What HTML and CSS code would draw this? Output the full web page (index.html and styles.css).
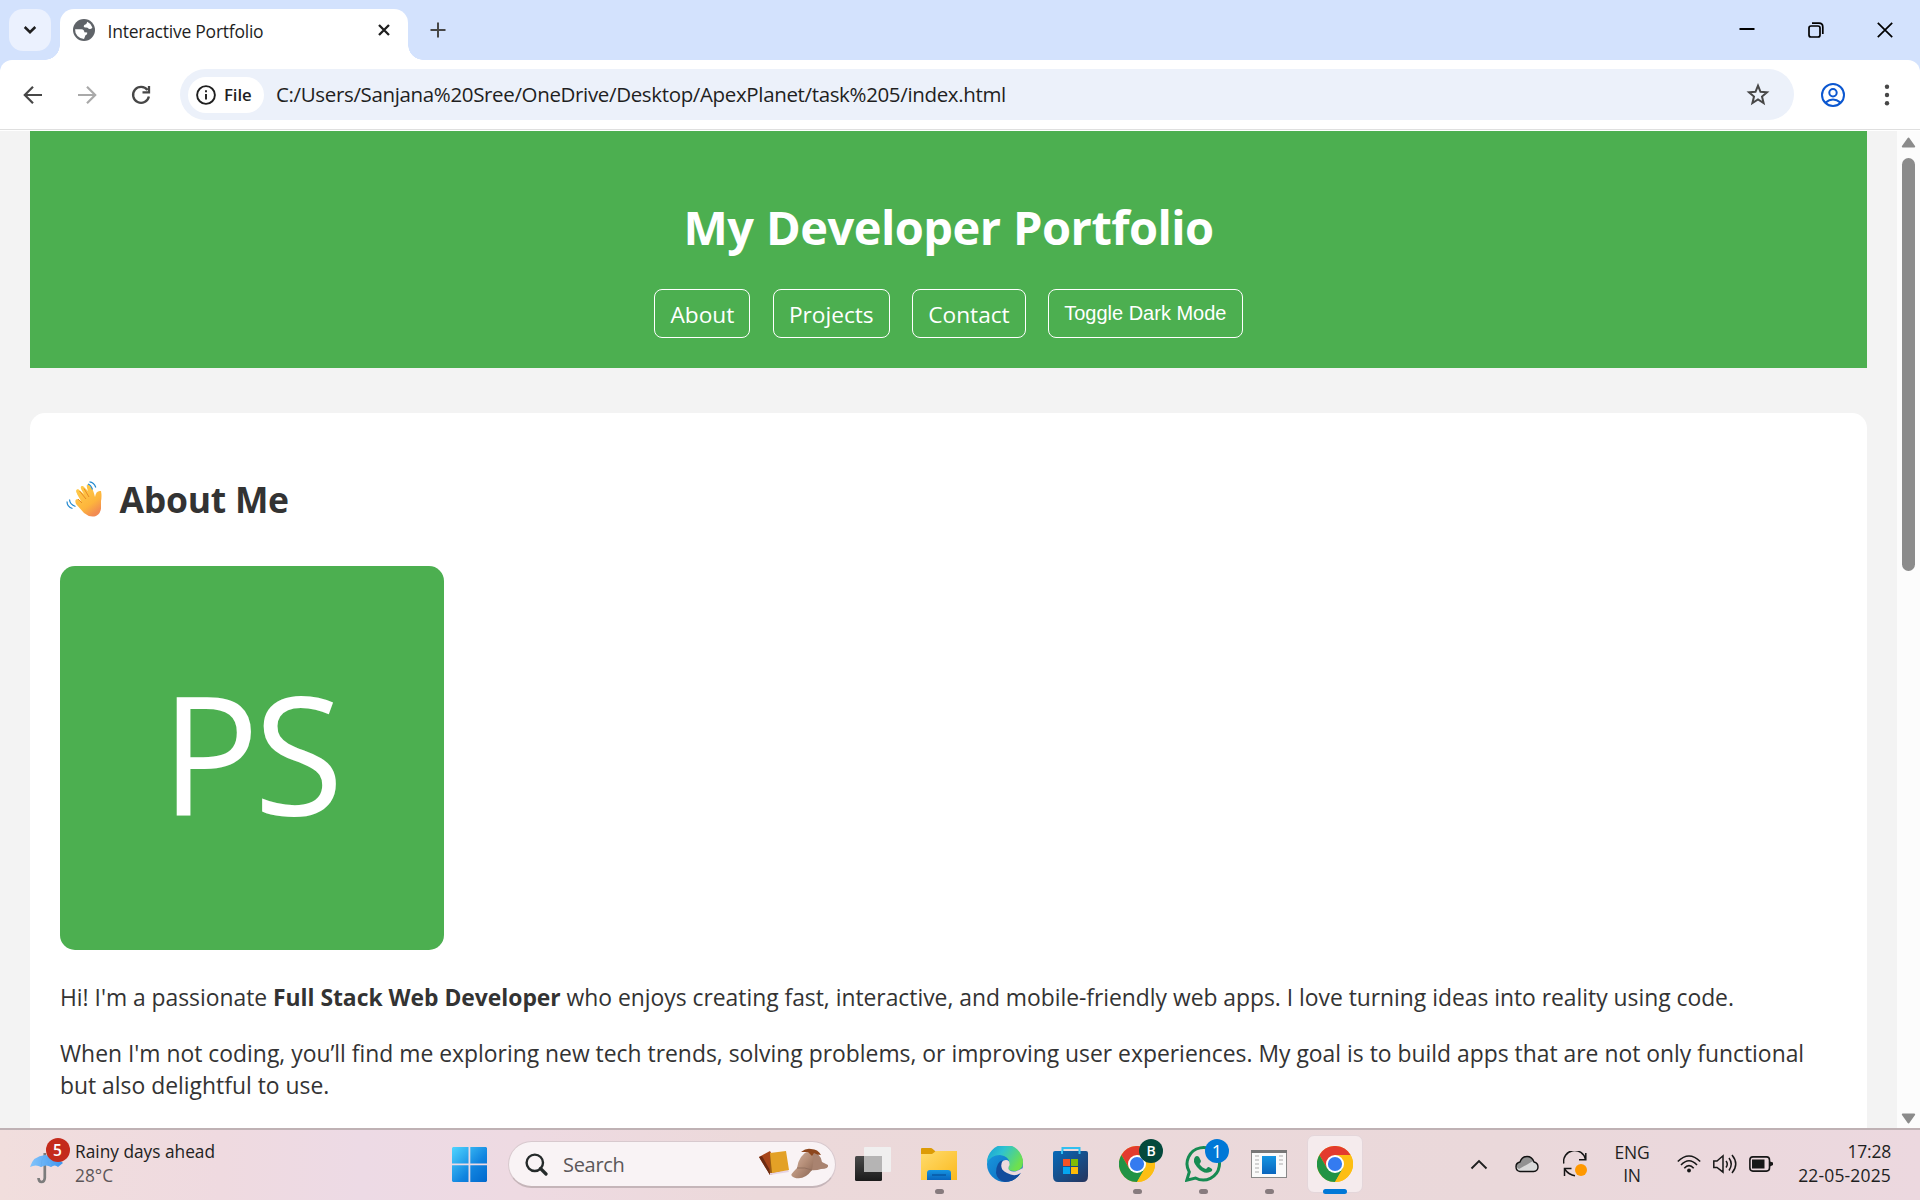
FILE: index.html
```html
<!DOCTYPE html>
<html lang="en">
<head>
<meta charset="utf-8">
<title>Interactive Portfolio</title>
<link rel="stylesheet" href="styles.css">
</head>
<body>
<svg width="0" height="0" class="defs" aria-hidden="true">
  <defs>
    <linearGradient id="win" x1="0" y1="0" x2="1" y2="1"><stop offset="0" stop-color="#4fd5ff"/><stop offset=".6" stop-color="#1184df"/><stop offset="1" stop-color="#0068cd"/></linearGradient>
    <linearGradient id="fold" x1="0" y1="0" x2="1" y2="1"><stop offset="0" stop-color="#ffdc6e"/><stop offset="1" stop-color="#fbb91d"/></linearGradient>
    <linearGradient id="blue" x1="0" y1="0" x2="0" y2="1"><stop offset="0" stop-color="#1595e2"/><stop offset="1" stop-color="#0965be"/></linearGradient>
    <linearGradient id="edgeTop" x1="0" y1="0" x2="1" y2=".5"><stop offset="0" stop-color="#159bd8"/><stop offset=".45" stop-color="#2fc3cf"/><stop offset="1" stop-color="#6ee04e"/></linearGradient>
    <linearGradient id="edgeLow" x1="0" y1="0" x2="1" y2="1"><stop offset="0" stop-color="#1b9de2"/><stop offset="1" stop-color="#0a63b8"/></linearGradient>
    <linearGradient id="store" x1="0" y1="0" x2="1" y2="1"><stop offset="0" stop-color="#0669b9"/><stop offset="1" stop-color="#27345c"/></linearGradient>
    <linearGradient id="dark" x1="0" y1="0" x2="0" y2="1"><stop offset="0" stop-color="#4a4a4a"/><stop offset="1" stop-color="#1b1b1b"/></linearGradient>
    <linearGradient id="hand" x1="0" y1="0" x2=".6" y2="1"><stop offset="0" stop-color="#ffcf4d"/><stop offset=".7" stop-color="#fdb53c"/><stop offset="1" stop-color="#f28b52"/></linearGradient>
    <linearGradient id="umb" x1="0" y1="0" x2="1" y2="0"><stop offset="0" stop-color="#83c4fb"/><stop offset="1" stop-color="#3d95ee"/></linearGradient>
    <linearGradient id="cap" x1="0" y1="0" x2="1" y2="1"><stop offset="0" stop-color="#d5b9a7"/><stop offset=".5" stop-color="#b8917b"/><stop offset="1" stop-color="#8a6553"/></linearGradient>
    <symbol id="chrome" viewBox="0 0 36 36">
      <circle cx="18" cy="18" r="18" fill="#fdbe13"/>
      <path d="M18 9H33.6A18 18 0 0 0 2.4 9L10.2 22.5Z" fill="#e33b2e"/>
      <path d="M2.4 9A18 18 0 0 0 18 36L25.8 22.5H10.2Z" fill="#219345"/>
      <path d="M18 9H33.6A18 18 0 0 1 18 36L25.8 22.5Z" fill="#fdbe13"/>
      <circle cx="18" cy="18" r="9" fill="#fff"/><circle cx="18" cy="18" r="7.1" fill="#347bf0"/>
    </symbol>
  </defs>
</svg>

<div class="tabstrip">
  <div class="tab-search"><svg width="14" height="10" viewBox="0 0 14 10"><path d="M1.700 2 7 7.200 12.300 2" fill="none" stroke="#1f1f1f" stroke-width="2.500"/></svg></div>
  <div class="tab">
    <svg class="globe" width="22" height="22" viewBox="0 0 22 22"><circle cx="11" cy="11" r="11" fill="#5f6368"/><path d="M2.100 10.300 8.500 10.200Q11.400 10.600 11.300 13.200L14.200 13.400Q14.800 15.600 12.500 16.200L11 19.900A9 9 0 0 1 2.100 10.300ZM14.300 2.700Q17.900 4.300 19.400 8.500Q17.800 10.900 15.700 9.700Q14.500 8.200 12.300 8.500Q9.800 8.300 11.300 6.100Q13.800 5.500 14.300 2.700Z" fill="#fff"/></svg>
    <span class="tab-title">Interactive Portfolio</span>
    <svg class="tab-close" width="12" height="12" viewBox="0 0 12 12"><path d="M1 1 11 11M11 1 1 11" stroke="#1f1f1f" stroke-width="2.300"/></svg>
  </div>
  <svg class="new-tab" width="16" height="16" viewBox="0 0 16 16"><path d="M8 .5V15.500M.5 8H15.500" stroke="#474747" stroke-width="2"/></svg>
  <div class="window-controls">
    <svg width="16" height="16" viewBox="0 0 16 16"><path d="M.5 7H15.500" stroke="#000" stroke-width="2"/></svg>
    <svg width="16" height="16" viewBox="0 0 16 16"><rect x="1" y="4" width="11" height="11" rx="2" fill="none" stroke="#000" stroke-width="1.700"/><path d="M4 1.200H11Q14.800 1.200 14.800 5V12" fill="none" stroke="#000" stroke-width="1.700"/></svg>
    <svg width="16" height="16" viewBox="0 0 16 16"><path d="M.8 .8 15.200 15.200M15.200 .8 .8 15.200" stroke="#000" stroke-width="1.700"/></svg>
  </div>
</div>

<div class="toolbar">
  <div class="nav-icons">
    <svg width="20" height="20" viewBox="0 0 20 20"><path d="M19 10H3M10 1.800 1.800 10 10 18.200" fill="none" stroke="#474747" stroke-width="2.200"/></svg>
    <svg width="20" height="20" viewBox="0 0 20 20"><path d="M1 10H17M10 1.800 18.200 10 10 18.200" fill="none" stroke="#a9a9a9" stroke-width="2.200"/></svg>
    <svg width="20" height="20" viewBox="0 0 20 20"><path d="M16.500 5A8 8 0 1 0 17.900 11.500M18 1V7.300H11.500" fill="none" stroke="#474747" stroke-width="2.300"/></svg>
  </div>
  <div class="omnibox">
    <div class="chip"><svg width="20" height="20" viewBox="0 0 20 20"><circle cx="10" cy="10" r="8.900" fill="none" stroke="#1f1f1f" stroke-width="1.900"/><path d="M10 9V14.500M10 5.200V7.300" stroke="#1f1f1f" stroke-width="1.900"/></svg><span>File</span></div>
    <span class="url">C:/Users/Sanjana%20Sree/OneDrive/Desktop/ApexPlanet/task%205/index.html</span>
    <svg class="star" width="24" height="23" viewBox="0 0 24 23"><path d="M12 2.700 14.500 8.800 21 9.300 16 13.600 17.600 20 12 16.500 6.400 20 8 13.600 3 9.300 9.500 8.800Z" fill="none" stroke="#474747" stroke-width="2"/></svg>
  </div>
  <svg class="profile" width="24" height="24" viewBox="0 0 24 24" fill="none" stroke="#0b57d0" stroke-width="2"><circle cx="12" cy="12" r="11"/><circle cx="12" cy="9.700" r="3.700"/><path d="M4.500 19.600Q12 13.500 19.500 19.600"/></svg>
  <svg class="menu" width="6" height="22" viewBox="0 0 6 22" fill="#474747"><circle cx="3" cy="2.700" r="2.200"/><circle cx="3" cy="11" r="2.200"/><circle cx="3" cy="19.300" r="2.200"/></svg>
</div>

<div class="viewport">
  <main class="page">
    <header class="hero">
      <h1>My Developer Portfolio</h1>
      <nav>
        <a class="nav-button">About</a><a class="nav-button">Projects</a><a class="nav-button">Contact</a><a class="nav-button toggle">Toggle Dark Mode</a>
      </nav>
    </header>
    <section class="about">
      <h2>
        <svg width="36" height="36" viewBox="0 0 36 36"><path d="M12 14Q8 9 12 8L18 13Q12 4 17 5L22 10Q19 2 23 4Q27 7 29 16Q30 9 35 10Q36 15 35 20V27Q35 32 30 35Q24 37 18 32L10 23Q8 18 12 18L15 20L11 13Q11 10 14 11Z" fill="url(#hand)"/><path d="M13.500 10 20 18M18 7.500 23 16M12 18 16 22" stroke="#e68a25" stroke-width="1" fill="none"/><path d="M22 3Q25 4 26.500 8.500M23.500 .8Q28 1 29.800 6.500M3.500 18.500Q3.800 23.500 9.500 25.500M1 20.500Q1 26 6.500 27.500" fill="none" stroke="#2088d0" stroke-width="1.200"/></svg>
        <span>About Me</span>
      </h2>
      <div class="avatar"><span>PS</span></div>
      <p class="intro">Hi! I'm a passionate <strong>Full Stack Web Developer</strong> who enjoys creating fast, interactive, and mobile-friendly web apps. I love turning ideas into reality using code.</p>
      <p>When I'm not coding, you’ll find me exploring new tech trends, solving problems, or improving user experiences. My goal is to build apps that are not only functional<br>but also delightful to use.</p>
    </section>
  </main>
  <div class="scrollbar">
    <svg width="15" height="11" viewBox="0 0 15 11"><path d="M7.500 1.500 13.200 9.500H1.800Z" fill="#8b8b8b" stroke="#8b8b8b" stroke-width="2" stroke-linejoin="round"/></svg>
    <div class="thumb"></div>
    <svg class="down" width="15" height="11" viewBox="0 0 15 11"><path d="M7.500 9.500 13.200 1.500H1.800Z" fill="#8b8b8b" stroke="#8b8b8b" stroke-width="2" stroke-linejoin="round"/></svg>
  </div>
</div>

<footer class="taskbar">
  <div class="weather">
    <div class="weather-icon">
      <svg width="34" height="32" viewBox="0 0 34 32"><path d="M14.800 1V26Q14.500 30 11.500 30Q8.800 30 8.500 26" fill="none" stroke="#7c7c7c" stroke-width="2.700"/><path d="M0 15Q3 4 15 3Q27 4 33 11L28 15Q25 12 21 15Q16 12 11 15Q6 12 0 15Z" fill="url(#umb)"/><path d="M11 15Q11 7 15 3Q20 8 21 15" fill="none" stroke="#66acee" stroke-width=".8"/></svg>
      <span class="badge red">5</span>
    </div>
    <div class="weather-text"><span>Rainy days ahead</span><span class="temp">28°C</span></div>
  </div>
  <div class="start"><svg width="35" height="35" viewBox="0 0 35 35"><path d="M1 0H16.500V16.500H0V1ZM18.300 0H34L35 1V16.500H18.300ZM0 18.300H16.500V35H1L0 34ZM18.300 18.300H35V34L34 35H18.300Z" fill="url(#win)"/></svg></div>
  <div class="search">
    <svg width="23" height="23" viewBox="0 0 23 23"><circle cx="9.800" cy="9.800" r="8.200" fill="none" stroke="#252a2a" stroke-width="2.400"/><path d="M15.500 15.500 21 21" stroke="#252a2a" stroke-width="3.200" stroke-linecap="round"/></svg>
    <span>Search</span>
    <svg class="search-art" width="70" height="32" viewBox="0 0 70 32"><path d="M0 9 11 3 22 23 11 27Z" fill="#a84519"/><path d="M0 9 11 27 12 24 3 8Z" fill="#6c2b12"/><path d="M11 25 29 22 30 24 11 27Z" fill="#e6d3e4"/><path d="M11 5 27 3 30 22 13 25Q10 25 11 21Z" fill="#e3a126"/><path d="M11 5 13 25Q10 25 11 21Z" fill="#9d5c13"/><path d="M52 3Q61 4 63 14L69 17Q70 21 62 21Q57 23 50 22Z" fill="#a98370"/><path d="M38 20Q40 6 52 2Q56 10 53 22Q45 33 35 29.500Q31 28 33 25.500Q35 23 38 20Z" fill="url(#cap)"/><path d="M42 4Q47 0 52 1Q59 1 62 7Q58 7 55 5L53 8 49 4Z" fill="#8d461d"/><path d="M38 20Q46 19 53 22" fill="none" stroke="#92705f" stroke-width="1"/></svg>
  </div>
  <div class="apps">
    <div class="app"><svg width="36" height="36" viewBox="0 0 36 36"><rect x="0" y="10" width="27" height="25" rx="1.500" fill="url(#dark)"/><rect x="9" y="1" width="27" height="25" rx="1" fill="#f0efef"/><path d="M9 10H27V26H9Z" fill="#b5b4b4"/></svg></div>
    <div class="app running"><svg width="36" height="36" viewBox="0 0 36 36"><path d="M0 3Q0 2 1 2H10Q11 2 15 6V10H0Z" fill="#dd9b05"/><path d="M0 8H11L15 5H36V34H0Z" fill="url(#fold)"/><path d="M6 34V27Q6 24 9 24H27Q30 24 30 27V34Z" fill="url(#blue)"/><path d="M11 29H25" stroke="#0859a5" stroke-width="1.500"/></svg></div>
    <div class="app"><svg width="36" height="36" viewBox="0 0 36 36"><circle cx="18" cy="18" r="18" fill="url(#edgeLow)"/><path d="M0 17A18 18 0 0 1 36 16Q36 25 27 25Q19 25 22 19Q24 11 13 9Q4 9 0 17Z" fill="url(#edgeTop)"/><path d="M14 17Q10 33 25 34.500A18 18 0 0 0 33.500 27Q34 26 32.500 27Q23 31 19 24Q17 20 14 17Z" fill="#124c9d"/><path d="M14 20Q14 14 19 14Q23 14 22.500 19Q19 25 27 25.500Q31 25 35.500 22Q36.500 26 33 27.500Q27 31 20 27Q14 24 14 20Z" fill="#ecdadd"/><path d="M9 27Q9 16 16 14Q13 18 15 24Q19 31 28 30Q32 29 33.500 27Q27 36 18 36Q10 34 9 27Z" fill="#124c9d"/></svg></div>
    <div class="app"><svg width="36" height="36" viewBox="0 0 36 36"><path d="M9.500 8V2H26.500V8" fill="none" stroke="#31bff0" stroke-width="2"/><path d="M0 7Q0 5 2 5H33Q35 5 35 7V30Q35 36 30 36H5Q0 36 0 30Z" fill="url(#store)"/><path d="M9 5V8M26.500 5V8" stroke="#31bff0" stroke-width="2"/><path d="M10 13H17V20H10Z" fill="#f35325"/><path d="M18 13H25V20H18Z" fill="#81bc06"/><path d="M10 21H17V28H10Z" fill="#05a6f0"/><path d="M18 21H25V28H18Z" fill="#ffba08"/></svg></div>
    <div class="app running"><svg width="36" height="36"><use href="#chrome"/></svg><span class="badge green">B</span></div>
    <div class="app running"><svg width="36" height="36" viewBox="0 0 36 36"><path d="M1.800 34.200 4.300 26A16.200 16.200 0 1 1 10.500 32Z" fill="none" stroke="#168b52" stroke-width="3"/><path d="M10 11Q12 9 14 11L16 15Q15.500 17 14.500 18Q17 22 21 23L23 21Q24 20.500 27 23Q28 25 25 26Q19 29 12 21Q7 15 10 11Z" fill="#168b52"/></svg><span class="badge azure">1</span></div>
    <div class="app running"><svg width="36" height="36" viewBox="0 0 36 36"><rect x=".5" y="4.500" width="35" height="27" fill="#fafafa" stroke="#888"/><path d="M0 4H36V7H0Z" fill="#777"/><path d="M4 10H8M4 14H8M4 18H8M4 22H8M4 26H8M28 10H32M28 14H32M28 18H32" stroke="#d3d3d3" stroke-width="2"/><rect x="11" y="10" width="14" height="18" fill="url(#blue)"/></svg></div>
    <div class="app active"><svg width="36" height="36"><use href="#chrome"/></svg></div>
  </div>
  <div class="tray">
    <div class="slot caret"><svg width="18" height="11" viewBox="0 0 18 11"><path d="M1.500 9.500 9 2 16.500 9.500" fill="none" stroke="#1f1f1f" stroke-width="1.900"/></svg></div>
    <div class="slot wide"><svg width="24" height="18" viewBox="0 0 24 18"><path d="M5 16.500Q1 16 1 11.500Q1 8 5 7Q7 1.500 12 1.500Q17 1.500 19 7Q23 8 23 12Q23 16 18.500 16.500Z" fill="#dadada"/><path d="M1 11.500Q1 8 5 7Q7 1.500 12 1.500Q16 1.500 18.500 6Q16 7 13 9L4 14Z" fill="#929292"/><path d="M5 16.500Q1 16 1 11.500Q1 8 5 7Q7 1.500 12 1.500Q17 1.500 19 7Q23 8 23 12Q23 16 18.500 16.500Z" fill="none" stroke="#111" stroke-width="1.400"/></svg></div>
    <div class="slot wide"><svg width="24" height="26" viewBox="0 0 24 26"><path d="M.8 12.500A11 11 0 0 1 22.500 8.500M22.800 2V8.800H16M1.500 25V17.500H8.500M2 18.500Q6 24 12 24.700" fill="none" stroke="#161616" stroke-width="1.500"/><circle cx="18" cy="19" r="6" fill="#ff9800"/></svg></div>
    <div class="lang"><span>ENG</span><span>IN</span></div>
    <div class="slot"><svg width="24" height="18" viewBox="0 0 24 18" fill="none" stroke="#171717" stroke-width="1.600"><path d="M.8 6.500Q12-4.500 23.200 6.500M4 10Q12 1.500 20 10M7.300 13.300Q12 8 16.700 13.300"/><circle cx="12" cy="15.500" r="1.900" fill="#171717" stroke="none"/></svg></div>
    <div class="slot"><svg width="24" height="20" viewBox="0 0 24 20" fill="none" stroke="#171717" stroke-width="1.500"><path d="M.8 7H4L10 1.800V18.200L4 13.500H.8ZM13 7Q15.500 10 13 13.500M16 4Q20.500 10 16 16.500M19 1Q26.500 10 19 19"/></svg></div>
    <div class="slot"><svg width="24" height="16" viewBox="0 0 24 16"><rect x=".9" y=".9" width="19.600" height="14.200" rx="3" fill="none" stroke="#171717" stroke-width="1.600"/><rect x="3" y="3.500" width="12.500" height="9" fill="#171717"/><path d="M21 5.500 24 6.500V9L21 10.500Z" fill="#171717"/></svg></div>
    <div class="clock"><span>17:28</span><span class="date">22-05-2025</span></div>
  </div>
</footer>
</body>
</html>
```
FILE: styles.css
```css
* { box-sizing: border-box; }
body {
  margin: 0; width: 1920px; height: 1200px; overflow: hidden;
  display: flex; flex-direction: column;
  font-family: "Open Sans", "Noto Sans", sans-serif; color: #333;
}
svg { display: block; flex: none; }
.defs { position: absolute; }

/* Tab strip */
.tabstrip { height: 60px; flex: none; background: #d3e2fd; display: flex; align-items: center; padding-left: 9px; }
.tab-search { width: 42px; height: 42px; border-radius: 14px; background: #ebf1fe; display: flex; align-items: center; justify-content: center; }
.tab {
  position: relative; align-self: flex-end; margin-left: 9px; width: 348px; height: 51px;
  background: #fff; border-radius: 14px 14px 0 0; display: flex; align-items: center; padding: 0 18px 9px 13px;
}
.tab::before, .tab::after { content: ""; position: absolute; bottom: 0; width: 15px; height: 15px; }
.tab::before { left: -15px; background: radial-gradient(circle at 0 0, transparent 14.500px, #fff 15px); }
.tab::after { right: -15px; background: radial-gradient(circle at 100% 0, transparent 14.500px, #fff 15px); }
.tab-title { margin-left: 12.500px; margin-top: 1px; font-size: 17.500px; letter-spacing: -.24px; color: #1f1f1f; white-space: nowrap; }
.tab-close { margin-left: auto; }
.new-tab { margin-left: 22px; }
.window-controls { display: flex; gap: 53px; margin-left: auto; padding-right: 27px; }

/* Toolbar */
.toolbar {
  position: relative; height: 71px; flex: none; background: linear-gradient(#d3e2fd 0 12px, #fff 12px);
  display: flex; align-items: center; z-index: 0; padding: 0 30px 2px 23px;
}
.toolbar::before { content: ""; position: absolute; z-index: -1; inset: 0 0 1px; background: #fff; border-radius: 12px 12px 0 0; border-bottom: 1px solid #dfdfdf; }
.nav-icons { display: flex; gap: 34px; width: 157px; }
.omnibox { width: 1614px; height: 51px; border-radius: 26px; background: #ecf1fa; display: flex; align-items: center; padding: 0 24px 0 8px; color: #1f1f1f; }
.chip { width: 76px; height: 36px; border-radius: 18px; background: #fff; display: flex; align-items: center; gap: 8px; padding-left: 8px; font-size: 16.800px; font-weight: 600; letter-spacing: -.1px; }
.url { margin: -2px 0 0 12px; font-size: 20.500px; letter-spacing: -.35px; white-space: nowrap; }
.star { margin-left: auto; }
.profile { margin-left: 27px; }
.menu { margin-left: auto; }

/* Web page */
.viewport { height: 997px; flex: none; display: flex; background: #f3f3f3; overflow: hidden; }
.page { width: 1897px; padding: 0 30px; }
.hero { height: 237px; background: #4caf50; color: #fff; padding-top: 63px; }
h1 { margin: 0; height: 66px; line-height: 66px; text-align: center; font-size: 47px; letter-spacing: -.55px; word-spacing: 1px; }
nav { display: flex; gap: 22.500px; justify-content: center; margin-top: 29px; }
.nav-button { height: 49px; border: 1px solid #fff; border-radius: 8px; padding: 9px 15px 0; font-size: 22.700px; line-height: 32px; white-space: nowrap; }
.toggle { font: 20px/28px "Liberation Sans", Arial, sans-serif; }
.about { margin-top: 45px; height: 760px; background: #fff; border-radius: 15px; padding: 61px 30px 0; }
h2 { margin: 0; height: 50px; display: flex; align-items: center; gap: 17.500px; padding-left: 6px; font-size: 35.500px; letter-spacing: -.25px; }
.avatar { margin-top: 42px; width: 384px; height: 384px; border-radius: 15px; background: #4caf50; color: #fff; display: flex; align-items: center; justify-content: center; }
.avatar span { font-size: 164px; line-height: 200px; letter-spacing: -5.500px; margin-top: -12px; padding-right: 5px; }
p { margin: 24px 0 0; font-size: 22.890px; line-height: 32px; white-space: nowrap; }
.intro { margin-top: 32px; letter-spacing: -.025px; }
.scrollbar { width: 23px; background: #fcfcfc; display: flex; flex-direction: column; align-items: center; padding: 6px 0 4px; }
.thumb { width: 13px; height: 413px; border-radius: 7px; background: #8b8b8b; margin-top: 10px; }
.down { margin-top: auto; }

/* Taskbar */
.taskbar {
  height: 72px; flex: none; border-top: 2px solid #bfb1b4; display: flex;
  background: linear-gradient(90deg, #f1dedd 0, #efdae0 220px, #eddae5 360px, #eedae2 520px, #ecd9da 760px, #ead8da 1500px, #ecd8df 1920px);
}
.weather { width: 436px; display: flex; padding-left: 30px; }
.weather-icon { position: relative; width: 45px; padding-top: 22px; }
.badge { position: absolute; width: 24px; height: 24px; border-radius: 50%; color: #fff; font-size: 15.500px; line-height: 24px; text-align: center; }
.red { background: #c42b1c; left: 15.500px; top: 7.500px; font-weight: 600; }
.green { background: #04493c; right: 7px; top: 8px; font-size: 14px; font-weight: 600; }
.azure { background: #0078d7; right: 7px; top: 8px; font-size: 18px; }
.weather-text { display: flex; flex-direction: column; font-size: 17.300px; line-height: 24px; padding-top: 10px; color: #222; }
.temp { color: #5c5658; }
.start { width: 66px; display: flex; justify-content: center; padding-top: 17px; }
.search {
  margin: 11px 0 0 6px; width: 328px; height: 47px; border: 1px solid #d8c9ce; border-bottom: 2px solid #c5b5b9;
  border-radius: 24px; background: #f9f3f5; display: flex; align-items: center; padding: 0 6px 0 16px; font-size: 20px; color: #5b5759;
}
.search span { margin-left: 15px; letter-spacing: -.3px; }
.search-art { margin-left: auto; }
.apps { display: flex; margin-left: 4px; padding-top: 1px; }
.app { position: relative; width: 66px; height: 68px; padding: 15px 15px 0; }
.running::after, .active::after { content: ""; position: absolute; bottom: 5px; left: 50%; width: 9px; height: 5px; margin-left: -4.500px; border-radius: 3px; background: #877b7e; }
.active::before { content: ""; position: absolute; z-index: -1; inset: 4px 5px 6px; background: #f5ebed; border: 1px solid #e4d6da; border-radius: 7px; }
.active { z-index: 0; }
.active::after { width: 24px; margin-left: -12px; background: #0078d7; }
.tray { display: flex; margin-left: auto; padding-right: 29px; color: #1f1f1f; }
.slot { width: 36px; display: flex; align-items: center; justify-content: center; padding-bottom: 2px; }
.caret { margin-right: 6px; }
.wide { width: 48px; }
.lang { width: 54px; margin: 0 12px 0 6px; text-align: center; }
.lang, .clock { display: flex; flex-direction: column; font-size: 17.500px; line-height: 23px; padding-top: 11px; letter-spacing: -.2px; }
.clock { width: 112px; text-align: right; line-height: 24px; padding-top: 9px; }
.date { letter-spacing: .15px; }
```
